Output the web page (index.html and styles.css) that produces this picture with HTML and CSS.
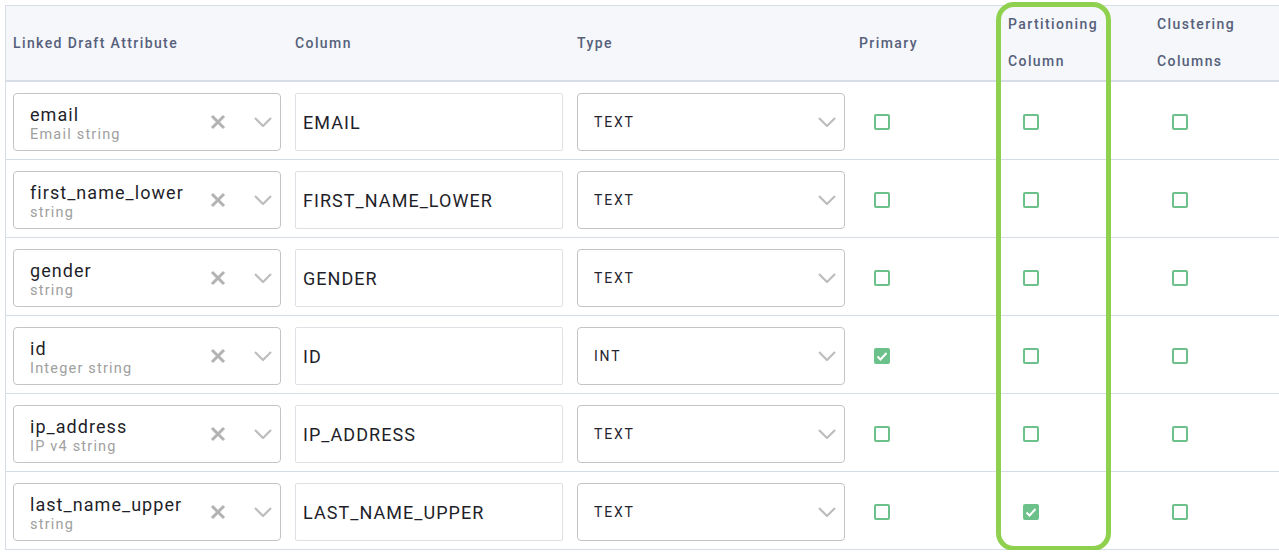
FILE: index.html
```html
<!DOCTYPE html>
<html>
<head>
<meta charset="utf-8">
<link rel="stylesheet" href="styles.css">
</head>
<body>
<div class="wrap">
  <div class="table">
    <div class="row head">
      <div class="cell">Linked Draft Attribute</div>
      <div class="cell">Column</div>
      <div class="cell">Type</div>
      <div class="cell">Primary</div>
      <div class="cell">Partitioning<br>Column</div>
      <div class="cell">Clustering<br>Columns</div>
    </div>

    <div class="row">
      <div class="cell"><div class="attr"><div class="attr-text"><div class="name">email</div><div class="sub">Email string</div></div><svg class="x" viewBox="0 0 16 16"><path d="M2 2L14 14M14 2L2 14"/></svg><svg class="chev" viewBox="0 0 18 10"><path d="M1 1L9 9L17 1"/></svg></div></div>
      <div class="cell"><div class="colin">EMAIL</div></div>
      <div class="cell"><div class="type"><span>TEXT</span><svg class="chev" viewBox="0 0 18 10"><path d="M1 1L9 9L17 1"/></svg></div></div>
      <div class="cell"><span class="cb"></span></div>
      <div class="cell"><span class="cb"></span></div>
      <div class="cell"><span class="cb"></span></div>
    </div>

    <div class="row">
      <div class="cell"><div class="attr"><div class="attr-text"><div class="name">first_name_lower</div><div class="sub">string</div></div><svg class="x" viewBox="0 0 16 16"><path d="M2 2L14 14M14 2L2 14"/></svg><svg class="chev" viewBox="0 0 18 10"><path d="M1 1L9 9L17 1"/></svg></div></div>
      <div class="cell"><div class="colin">FIRST_NAME_LOWER</div></div>
      <div class="cell"><div class="type"><span>TEXT</span><svg class="chev" viewBox="0 0 18 10"><path d="M1 1L9 9L17 1"/></svg></div></div>
      <div class="cell"><span class="cb"></span></div>
      <div class="cell"><span class="cb"></span></div>
      <div class="cell"><span class="cb"></span></div>
    </div>

    <div class="row">
      <div class="cell"><div class="attr"><div class="attr-text"><div class="name">gender</div><div class="sub">string</div></div><svg class="x" viewBox="0 0 16 16"><path d="M2 2L14 14M14 2L2 14"/></svg><svg class="chev" viewBox="0 0 18 10"><path d="M1 1L9 9L17 1"/></svg></div></div>
      <div class="cell"><div class="colin">GENDER</div></div>
      <div class="cell"><div class="type"><span>TEXT</span><svg class="chev" viewBox="0 0 18 10"><path d="M1 1L9 9L17 1"/></svg></div></div>
      <div class="cell"><span class="cb"></span></div>
      <div class="cell"><span class="cb"></span></div>
      <div class="cell"><span class="cb"></span></div>
    </div>

    <div class="row">
      <div class="cell"><div class="attr"><div class="attr-text"><div class="name">id</div><div class="sub">Integer string</div></div><svg class="x" viewBox="0 0 16 16"><path d="M2 2L14 14M14 2L2 14"/></svg><svg class="chev" viewBox="0 0 18 10"><path d="M1 1L9 9L17 1"/></svg></div></div>
      <div class="cell"><div class="colin">ID</div></div>
      <div class="cell"><div class="type"><span>INT</span><svg class="chev" viewBox="0 0 18 10"><path d="M1 1L9 9L17 1"/></svg></div></div>
      <div class="cell"><span class="cb on"><svg viewBox="0 0 16 16"><path d="M3.5 8.5L6.5 11.5L12.5 5"/></svg></span></div>
      <div class="cell"><span class="cb"></span></div>
      <div class="cell"><span class="cb"></span></div>
    </div>

    <div class="row">
      <div class="cell"><div class="attr"><div class="attr-text"><div class="name">ip_address</div><div class="sub">IP v4 string</div></div><svg class="x" viewBox="0 0 16 16"><path d="M2 2L14 14M14 2L2 14"/></svg><svg class="chev" viewBox="0 0 18 10"><path d="M1 1L9 9L17 1"/></svg></div></div>
      <div class="cell"><div class="colin">IP_ADDRESS</div></div>
      <div class="cell"><div class="type"><span>TEXT</span><svg class="chev" viewBox="0 0 18 10"><path d="M1 1L9 9L17 1"/></svg></div></div>
      <div class="cell"><span class="cb"></span></div>
      <div class="cell"><span class="cb"></span></div>
      <div class="cell"><span class="cb"></span></div>
    </div>

    <div class="row">
      <div class="cell"><div class="attr"><div class="attr-text"><div class="name">last_name_upper</div><div class="sub">string</div></div><svg class="x" viewBox="0 0 16 16"><path d="M2 2L14 14M14 2L2 14"/></svg><svg class="chev" viewBox="0 0 18 10"><path d="M1 1L9 9L17 1"/></svg></div></div>
      <div class="cell"><div class="colin">LAST_NAME_UPPER</div></div>
      <div class="cell"><div class="type"><span>TEXT</span><svg class="chev" viewBox="0 0 18 10"><path d="M1 1L9 9L17 1"/></svg></div></div>
      <div class="cell"><span class="cb"></span></div>
      <div class="cell"><span class="cb on"><svg viewBox="0 0 16 16"><path d="M3.5 8.5L6.5 11.5L12.5 5"/></svg></span></div>
      <div class="cell"><span class="cb"></span></div>
    </div>

    <div class="highlight"></div>
  </div>
</div>
</body>
</html>
```

FILE: styles.css
```css
html, body {
  margin: 0;
  padding: 0;
  background: #ffffff;
  overflow: hidden;
}
body {
  font-family: Roboto, "Noto Sans", Arial, sans-serif;
  color: #222;
}
.wrap {
  padding: 5px 0 0 5px;
}
.table {
  position: relative;
  width: 1320px;
  border: 1px solid #d6dde6;
  border-right: none;
  border-bottom: none;
}
.row {
  display: grid;
  grid-template-columns: 282px 282px 282px 149px 149px 176px;
  border-bottom: 1px solid #d6dde6;
  height: 77px;
  box-sizing: content-box;
}
.row > .cell {
  padding: 11px 7px 8px 7px;
  display: flex;
  align-items: center;
  box-sizing: border-box;
}
.row.head {
  background: #f5f7fa;
  height: 74px;
  border-bottom: 2px solid #d6dde6;
}
.row.head > .cell {
  padding: 0 7px;
  font-size: 14px;
  font-weight: 500;
  color: #56607a;
  line-height: 37px;
  letter-spacing: 1.4px;
}
.attr, .colin, .type {
  width: 100%;
  height: 58px;
  box-sizing: border-box;
  display: flex;
  align-items: center;
  background: #fff;
}
.attr {
  border: 1px solid #c4c4c4;
  border-radius: 4px;
  padding: 0 8px 0 16px;
}
.attr-text {
  flex: 1;
  display: flex;
  flex-direction: column;
  padding-top: 5px;
}
.name {
  font-size: 18px;
  line-height: 21px;
  color: #1f1f2a;
  letter-spacing: 1.05px;
}
.sub {
  font-size: 14.5px;
  line-height: 20px;
  color: #a0a0a0;
  letter-spacing: 1.2px;
}
.x {
  width: 16px;
  height: 16px;
  fill: none;
  stroke: #b3b3b3;
  stroke-width: 3;
  margin-right: 28px;
}
.chev {
  width: 18px;
  height: 10px;
  fill: none;
  stroke: #bdbdbd;
  stroke-width: 2.2;
}
.colin {
  border: 1px solid #dde1e6;
  border-radius: 2px;
  padding: 0 7px;
  font-size: 18px;
  color: #1f1f2a;
  letter-spacing: 1.05px;
}
.type {
  border: 1px solid #c4c4c4;
  border-radius: 4px;
  padding: 0 8px 0 16px;
  font-size: 14px;
  letter-spacing: 1.8px;
  color: #252530;
}
.type span {
  flex: 1;
}
.cb {
  width: 16px;
  height: 16px;
  box-sizing: border-box;
  border: 2px solid #6cc08a;
  border-radius: 2px;
  margin-left: 15px;
  display: block;
  position: relative;
}
.cb.on {
  background: #6cc08a;
}
.cb.on svg {
  position: absolute;
  left: -2px;
  top: -2px;
  width: 16px;
  height: 16px;
  fill: none;
  stroke: #fff;
  stroke-width: 2;
}
.highlight {
  position: absolute;
  left: 990px;
  top: -4px;
  width: 115px;
  height: 549px;
  box-sizing: border-box;
  border: 5px solid #8fd14f;
  border-radius: 18px;
  pointer-events: none;
}
```
